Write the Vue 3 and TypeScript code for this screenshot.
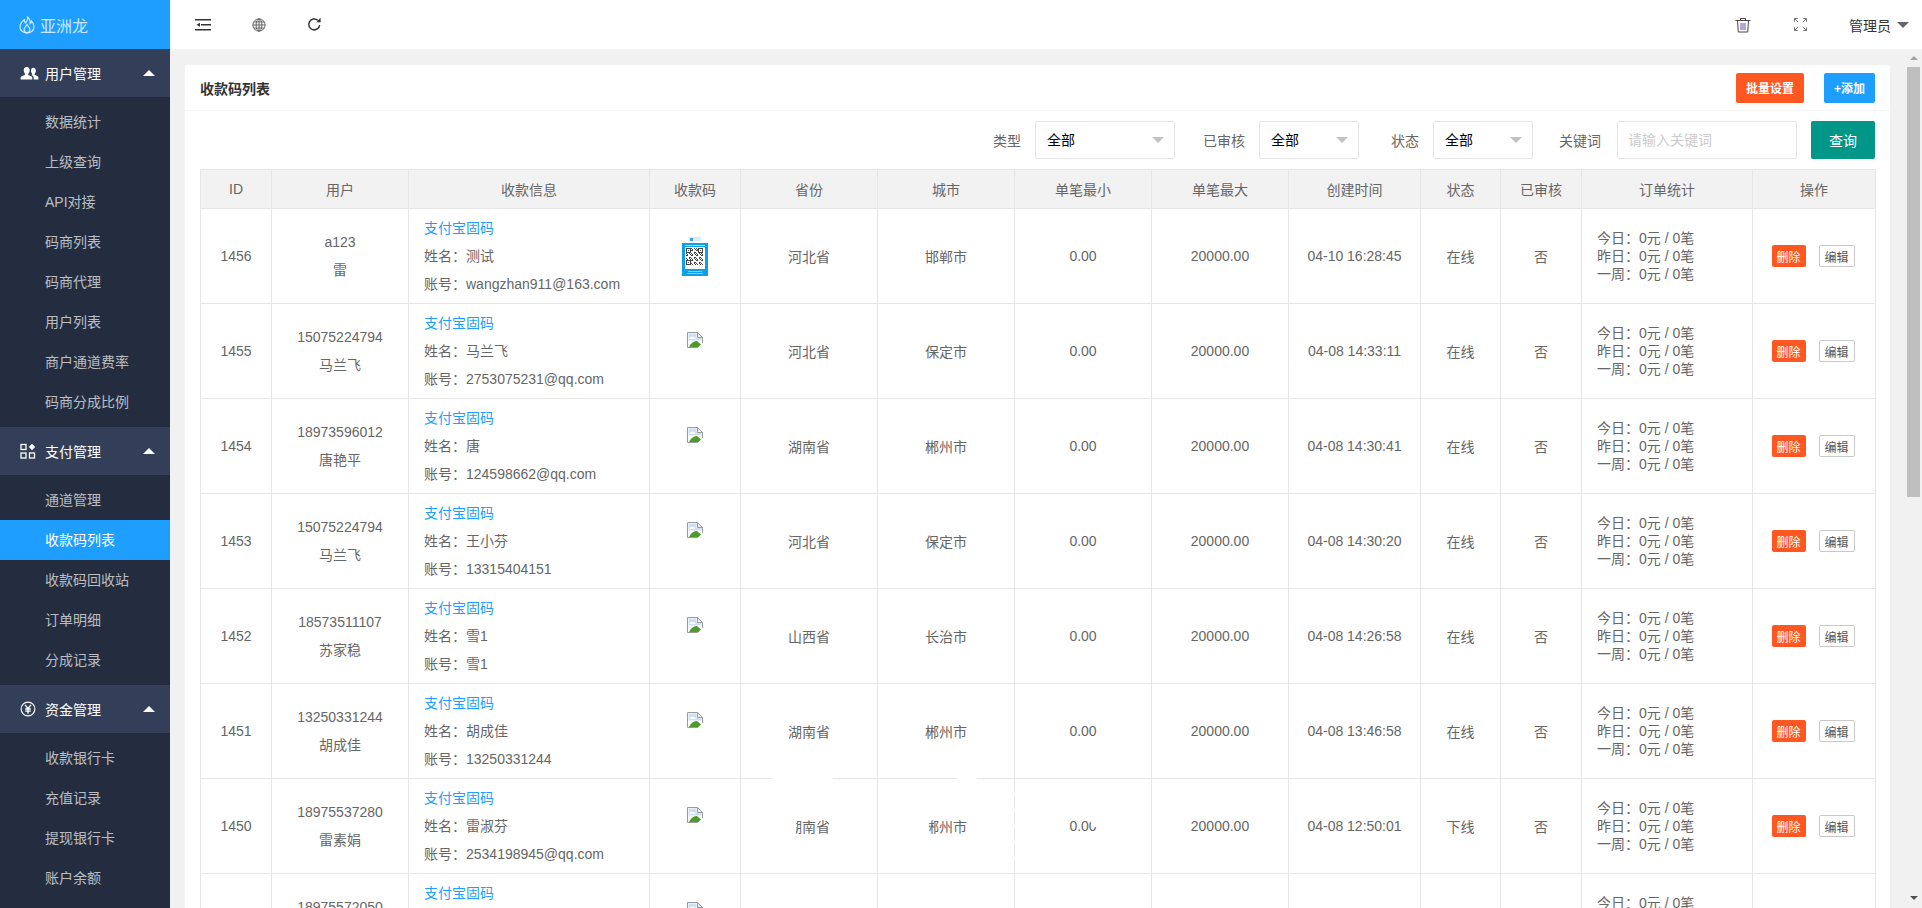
<template>
  <div class="page">
    <aside class="side">
      <div class="logo">
        <svg class="flame" viewBox="0 0 16 18" width="16" height="18" fill="none" stroke="currentColor" stroke-width="1.2">
          <path d="M8.500 1c.8 3-1 4.500-2 6C5.500 6 5.300 5 5.300 3.800 3 5.500 1 8 1 11c0 3.500 3 6 7 6s7-2.500 7-6c0-2.500-1-4.500-2.500-6 0 1.200-.5 2.200-1.300 2.800C11.300 5 10.500 2.500 8.500 1z" />
          <path d="M8 17c-2-.5-3-2-3-3.500C5 11.500 7 10.500 8 8.500c1 2 3 3 3 5 0 1.500-1 3-3 3.500z" />
        </svg>
        <span>亚洲龙</span>
      </div>
      <div v-for="group in menu" :key="group.title" class="group">
        <div class="head">
          <svg v-if="group.icon === 'users'" class="head-icon" viewBox="0 0 20 16" width="19" height="15" fill="#fff">
            <path d="M7 1.500c2 0 3.200 1.500 3.200 3.500S9.200 8.200 8.600 9c-.3.700.2 1.200 1.400 1.700 1.800.7 3 1.300 3 2.500V15H.5v-1.800c0-1.200 1.300-1.800 3-2.500C4.800 10.200 5.300 9.700 5.400 9 4.800 8.200 3.800 7 3.800 5S5 1.500 7 1.500z" />
            <path d="M14 2.500c1.700 0 2.800 1.300 2.800 3s-.9 2.700-1.400 3.500c-.2.600.2 1 1.200 1.400 1.500.6 2.900 1.100 2.900 2.300V15h-5v-2c0-1.300-1-2-2.500-2.800.5-.3 1-.6 1-1.200-.5-.8-1.400-1.800-1.400-3.500s1-3 2.400-3z" />
          </svg>
          <svg v-else-if="group.icon === 'apps'" class="head-icon" viewBox="0 0 16 16" width="16" height="16" fill="none" stroke="#fff" stroke-width="1.300">
            <rect x="1" y="1.500" width="5" height="5" />
            <rect x="1" y="10" width="5" height="5" />
            <rect x="9.500" y="10" width="5" height="5" />
            <path d="M12 .8l3.200 3.200L12 7.200 8.800 4z" fill="#fff" stroke="none" />
          </svg>
          <svg v-else class="head-icon" viewBox="0 0 16 16" width="16" height="16" fill="none" stroke="#fff" stroke-width="1.100">
            <circle cx="8" cy="8" r="6.900" />
            <path d="M5 3.800L8 7.500l3-3.700M8 7.500v5.200M5.200 8h5.600M5.200 10.200h5.600" stroke-width="1.300" />
          </svg>
          <span>{{ group.title }}</span>
          <i class="caret-up"></i>
        </div>
        <ul class="sub">
          <li v-for="item in group.items" :key="item" :class="{ active: item === current }">{{ item }}</li>
        </ul>
      </div>
    </aside>

    <div class="right">
      <header class="top">
        <div class="top-left">
          <svg viewBox="0 0 16 14" width="16" height="14" fill="#333">
            <rect x="0" y="1" width="16" height="1.500" />
            <rect x="6" y="6" width="10" height="1.500" />
            <rect x="0" y="11" width="16" height="1.500" />
            <path d="M1.500 6.800L5 4.800v4z" />
          </svg>
          <svg viewBox="0 0 16 16" width="14" height="14" fill="none" stroke="#555" stroke-width="1">
            <circle cx="8" cy="8" r="7" />
            <ellipse cx="8" cy="8" rx="3.300" ry="7" />
            <path d="M8 1v14M1 8h14M2 4.500h12M2 11.500h12" />
          </svg>
          <svg viewBox="0 0 16 16" width="15" height="15" fill="none" stroke="#333" stroke-width="1.600">
            <path d="M13.500 8.500A5.800 5.800 0 1 1 11.500 3.500" />
            <path d="M9.800 5.600h4.700V.9z" fill="#333" stroke="none" />
          </svg>
        </div>
        <div class="top-right">
          <svg class="trash" viewBox="0 0 16 16" width="16" height="16" fill="none" stroke="#444" stroke-width="1">
            <path d="M.5 3.500h15M5.500 3.500V1.500h5v2M2.500 3.500l.8 11.500h9.400l.8-11.500" />
            <path d="M6 6v7M8 6v7M10 6v7" stroke="#6a4fa0" />
          </svg>
          <svg class="expand" viewBox="0 0 14 14" width="13" height="13" fill="none" stroke="#666" stroke-width="1">
            <path d="M.5 4V.5H4M10 .5h3.500V4M13.500 10v3.500H10M4 13.500H.5V10M1 1l3.500 3.500M13 1L9.500 4.500M13 13L9.500 9.500M1 13l3.500-3.500" />
          </svg>
          <span class="admin">管理员</span>
          <i class="caret-down"></i>
        </div>
      </header>

      <div class="body">
        <main class="main">
          <section class="card">
            <div class="card-head">
              <span class="card-title">收款码列表</span>
              <div class="card-btns">
                <button class="btn orange">批量设置</button>
                <button class="btn blue">+添加</button>
              </div>
            </div>

            <div class="filters">
              <label class="f-label type">类型</label>
              <div class="select wide">全部<i class="caret-grey"></i></div>
              <label class="f-label audit">已审核</label>
              <div class="select">全部<i class="caret-grey"></i></div>
              <label class="f-label state">状态</label>
              <div class="select">全部<i class="caret-grey"></i></div>
              <label class="f-label word">关键词</label>
              <input class="keyword" placeholder="请输入关键词" />
              <button class="query">查询</button>
            </div>

            <div class="table-wrap">
              <table>
                <colgroup>
                  <col v-for="(w, i) in widths" :key="i" :style="{ width: w + 'px' }" />
                </colgroup>
                <thead>
                  <tr><th v-for="h in heads" :key="h">{{ h }}</th></tr>
                </thead>
                <tbody>
                  <tr v-for="(row, idx) in rows" :key="idx">
                    <td>{{ row.id }}</td>
                    <td class="two"><div>{{ row.user }}</div><div class="line">{{ row.real }}</div></td>
                    <td class="info">
                      <div class="link">支付宝固码</div>
                      <div>姓名：{{ row.name }}</div>
                      <div>账号：{{ row.account }}</div>
                    </td>
                    <td>
                      <div class="qr">
                        <svg v-if="idx === 0" viewBox="0 0 26 39" width="26" height="39" shape-rendering="crispEdges">
                          <rect x="7" y="0" width="12" height="4" fill="#d6ecf9" />
                          <rect x="8" y="0.500" width="3" height="3" fill="#3aa6e6" />
                          <rect x="0" y="6" width="26" height="33" fill="#0e9fe8" />
                          <rect x="3" y="8" width="20" height="1" fill="#9fd8f7" />
                          <rect x="3" y="10" width="20" height="22" fill="#fff" />
                          <rect v-for="c in qrCells" :key="c.x + '-' + c.y" :x="c.x" :y="c.y" width="1" height="1" fill="#444" />
                          <rect x="6" y="34" width="14" height="1" fill="#7cc9f3" />
                          <rect x="5" y="36" width="16" height="1" fill="#7cc9f3" />
                        </svg>
                        <svg v-else viewBox="0 0 16 16" width="16" height="16">
                          <path d="M.5.500h10l5 5v10H.5z" fill="#fff" stroke="#9a9a9a" />
                          <path d="M1.500 1.500h8v4h5v3H1.500z" fill="#cfe0f5" />
                          <path d="M2.500 6c1.500-1.800 4-1.800 6 0v1h-6z" fill="#fff" />
                          <path d="M2 15c2-4 5-6.500 8-6l4 3.500V15z" fill="#4f9a2d" />
                          <path d="M10.500.500v5h5z" fill="#f4f4f4" stroke="#9a9a9a" />
                          <path d="M16 10.500L10.500 16H16z" fill="#fff" />
                        </svg>
                      </div>
                    </td>
                    <td>{{ row.prov }}</td>
                    <td>{{ row.city }}</td>
                    <td>0.00</td>
                    <td>20000.00</td>
                    <td>{{ row.time }}</td>
                    <td>{{ row.state }}</td>
                    <td>否</td>
                    <td class="stats">
                      <div>今日：0元 / 0笔</div>
                      <div>昨日：0元 / 0笔</div>
                      <div>一周：0元 / 0笔</div>
                    </td>
                    <td>
                      <div class="ops">
                        <button class="xs del">删除</button>
                        <button class="xs edit">编辑</button>
                      </div>
                    </td>
                  </tr>
                </tbody>
              </table>
              <div class="patch p1"></div>
              <div class="patch p2"></div>
              <div class="patch p3"></div>
              <div class="patch p4"></div>
              <div class="patch p5"></div>
              <div class="patch p6"></div>
            </div>
          </section>
        </main>

        <div class="scrollbar">
          <i class="arrow-up"></i>
          <div class="thumb"></div>
          <i class="arrow-down"></i>
        </div>
      </div>
    </div>
  </div>
</template>

<script setup lang="ts">
const current = "收款码列表";

const menu = [
  {
    title: "用户管理",
    icon: "users",
    items: ["数据统计", "上级查询", "API对接", "码商列表", "码商代理", "用户列表", "商户通道费率", "码商分成比例"],
  },
  {
    title: "支付管理",
    icon: "apps",
    items: ["通道管理", "收款码列表", "收款码回收站", "订单明细", "分成记录"],
  },
  {
    title: "资金管理",
    icon: "rmb",
    items: ["收款银行卡", "充值记录", "提现银行卡", "账户余额"],
  },
];

const widths = [71, 137, 241, 91, 137, 137, 137, 137, 132, 80, 81, 171, 123];
const heads = ["ID", "用户", "收款信息", "收款码", "省份", "城市", "单笔最小", "单笔最大", "创建时间", "状态", "已审核", "订单统计", "操作"];

const rows = [
  { id: "1456", user: "a123", real: "雷", name: "测试", account: "wangzhan911@163.com", prov: "河北省", city: "邯郸市", time: "04-10 16:28:45", state: "在线" },
  { id: "1455", user: "15075224794", real: "马兰飞", name: "马兰飞", account: "2753075231@qq.com", prov: "河北省", city: "保定市", time: "04-08 14:33:11", state: "在线" },
  { id: "1454", user: "18973596012", real: "唐艳平", name: "唐", account: "124598662@qq.com", prov: "湖南省", city: "郴州市", time: "04-08 14:30:41", state: "在线" },
  { id: "1453", user: "15075224794", real: "马兰飞", name: "王小芬", account: "13315404151", prov: "河北省", city: "保定市", time: "04-08 14:30:20", state: "在线" },
  { id: "1452", user: "18573511107", real: "苏家稳", name: "雪1", account: "雪1", prov: "山西省", city: "长治市", time: "04-08 14:26:58", state: "在线" },
  { id: "1451", user: "13250331244", real: "胡成佳", name: "胡成佳", account: "13250331244", prov: "湖南省", city: "郴州市", time: "04-08 13:46:58", state: "在线" },
  { id: "1450", user: "18975537280", real: "雷素娟", name: "雷淑芬", account: "2534198945@qq.com", prov: "湖南省", city: "郴州市", time: "04-08 12:50:01", state: "下线" },
  { id: "", user: "18975572050", real: "", name: "", account: "", prov: "", city: "", time: "", state: "" },
];

// 收款码缩略图：三个定位角 + 伪随机点
const qrCells: { x: number; y: number }[] = [];
const isFinder = (a: number, b: number) => {
  const corner = (p: number, q: number) => {
    const dx = a - p;
    const dy = b - q;
    if (dx < 0 || dy < 0 || dx > 4 || dy > 4) return null;
    return !(dx === 0 || dy === 0 || dx === 4 || dy === 4) && !(dx === 2 && dy === 2);
  };
  return corner(0, 0) ?? corner(12, 0) ?? corner(0, 12);
};
for (let b = 0; b < 17; b++) {
  for (let a = 0; a < 17; a++) {
    const finder = isFinder(a, b);
    const dark = finder === null ? (a * 7 + b * 13 + a * b) % 5 < 2 : !finder;
    if (dark) qrCells.push({ x: 4 + a, y: 11 + b });
  }
}
</script>

<style>
html,
body {
  margin: 0;
  height: 100%;
  overflow: hidden;
}
</style>

<style scoped>
.page {
  display: flex;
  height: 908px;
  font-family: "Liberation Sans", "Noto Sans CJK SC", sans-serif;
  font-size: 14px;
  color: #666;
  overflow: hidden;
}

.side {
  width: 170px;
  flex: none;
  background: #232d3f;
  overflow: hidden;
}

.logo {
  height: 49px;
  background: #1e9fff;
  color: rgba(255, 255, 255, 0.75);
  display: flex;
  align-items: center;
  padding-left: 19px;
  font-size: 16px;
  gap: 5px;
}

.flame {
  flex: none;
}

.head {
  height: 48px;
  background: #333f58;
  color: #fff;
  display: flex;
  align-items: center;
  position: relative;
  padding-left: 45px;
}

.group:first-of-type .head {
  height: 49px;
}

.head-icon {
  position: absolute;
  left: 20px;
  top: 50%;
  transform: translateY(-50%);
}

.caret-up {
  position: absolute;
  left: 143px;
  top: 21px;
  border-left: 6px solid transparent;
  border-right: 6px solid transparent;
  border-bottom: 6px solid #fff;
}

.sub {
  list-style: none;
  margin: 0;
  padding: 5px 0;
  background: #232d3f;
  border-radius: 3px 3px 0 0;
}

.sub li {
  height: 40px;
  line-height: 40px;
  padding-left: 45px;
  color: rgba(255, 255, 255, 0.7);
}

.sub li.active {
  background: #1e9fff;
  color: #fff;
}

.right {
  flex: 1;
  min-width: 0;
  display: flex;
  flex-direction: column;
}

.top {
  height: 49px;
  flex: none;
  background: #fff;
  display: flex;
  justify-content: space-between;
  align-items: center;
}

.top-left {
  display: flex;
  align-items: center;
  gap: 41px;
  padding-left: 25px;
}

.top-right {
  display: flex;
  align-items: center;
  padding-right: 13px;
  color: #333;
}

.expand {
  margin-left: 43px;
}

.admin {
  margin-left: 42px;
}

.caret-down {
  margin-left: 6px;
  border-left: 6px solid transparent;
  border-right: 6px solid transparent;
  border-top: 6px solid #666;
}

.body {
  flex: 1;
  min-height: 0;
  display: flex;
  background: #f1f1f1;
}

.main {
  flex: 1;
  min-width: 0;
  padding: 16px 15px 0;
  overflow: hidden;
}

.scrollbar {
  width: 17px;
  flex: none;
  position: relative;
  display: flex;
  flex-direction: column;
  align-items: center;
  background: #f1f1f1;
}

.arrow-up {
  margin-top: 7px;
  border-left: 4px solid transparent;
  border-right: 4px solid transparent;
  border-bottom: 4px solid #a3a3a3;
}

.thumb {
  width: 13px;
  height: 430px;
  margin-top: 7px;
  background: #bfbfbf;
}

.arrow-down {
  position: absolute;
  bottom: 8px;
  border-left: 4px solid transparent;
  border-right: 4px solid transparent;
  border-top: 4px solid #505050;
}

.card {
  background: #fff;
  border-radius: 2px;
  padding-bottom: 20px;
}

.card-head {
  height: 45px;
  border-bottom: 1px solid #f6f6f6;
  display: flex;
  justify-content: space-between;
  align-items: center;
  padding: 0 15px 0 15px;
  box-sizing: content-box;
}

.card-title {
  color: #333;
  font-weight: 700;
}

.card-btns {
  display: flex;
  gap: 20px;
}

.btn {
  height: 30px;
  border: 0;
  border-radius: 2px;
  color: #fff;
  font: inherit;
  font-size: 12px;
  font-weight: 700;
  padding: 0;
}

.orange {
  width: 68px;
  background: #ff5722;
}

.blue {
  width: 51px;
  background: #1e9fff;
}

.filters {
  display: flex;
  justify-content: flex-end;
  align-items: center;
  padding: 10px 15px 10px 0;
}

.f-label {
  margin-right: 14px;
  white-space: nowrap;
}

.f-label.audit {
  margin-left: 28px;
}

.f-label.state {
  margin-left: 32px;
}

.f-label.word {
  margin-left: 26px;
  margin-right: 16px;
}

.select {
  position: relative;
  width: 100px;
  height: 38px;
  line-height: 36px;
  box-sizing: border-box;
  border: 1px solid #e6e6e6;
  border-radius: 2px;
  padding-left: 11px;
  color: #000;
}

.select.wide {
  width: 140px;
}

.caret-grey {
  position: absolute;
  right: 10px;
  top: 15px;
  border-left: 6px solid transparent;
  border-right: 6px solid transparent;
  border-top: 6px solid #c2c2c2;
}

.keyword {
  width: 180px;
  height: 38px;
  box-sizing: border-box;
  border: 1px solid #e6e6e6;
  border-radius: 2px;
  padding: 0 0 0 10px;
  font: inherit;
  outline: none;
}

.keyword::placeholder {
  color: #ccc;
}

.query {
  margin-left: 14px;
  width: 64px;
  height: 38px;
  border: 0;
  border-radius: 2px;
  background: #009688;
  color: #fff;
  font: inherit;
}

.table-wrap {
  position: relative;
  margin: 0 15px;
}

table {
  width: 1675px;
  table-layout: fixed;
  border-collapse: collapse;
  background: #fff;
}

th,
td {
  border: 1px solid #e6e6e6;
  text-align: center;
  font-weight: 400;
  padding: 0;
  color: #666;
}

th {
  height: 38px;
  background: #f2f2f2;
}

td {
  height: 94px;
}

.two div {
  line-height: 28px;
  min-height: 28px;
}

.info {
  text-align: left;
  padding-left: 15px;
  line-height: 28px;
}

.info div {
  min-height: 28px;
}

.link {
  color: #1e9fff;
}

.qr {
  height: 38px;
  display: flex;
  justify-content: center;
  align-items: flex-start;
}

.stats {
  text-align: left;
  padding-left: 15px;
  line-height: 18px;
}

.ops {
  display: flex;
  justify-content: center;
  gap: 13px;
  padding-right: 2px;
}

.xs {
  height: 22px;
  border-radius: 2px;
  font: inherit;
  font-size: 12px;
  padding: 0;
  box-sizing: border-box;
}

.del {
  width: 34px;
  border: 0;
  background: #ff5722;
  color: #fff;
}

.edit {
  width: 36px;
  border: 1px solid #c9c9c9;
  background: #fff;
  color: #555;
}

/* 第7行上的白色残影 */
.patch {
  position: absolute;
  background: #fff;
}

.p1 {
  left: 572px;
  top: 608px;
  width: 61px;
  height: 3px;
}

.p2 {
  left: 757px;
  top: 608px;
  width: 20px;
  height: 3px;
}

.p3 {
  left: 588px;
  top: 648px;
  width: 8px;
  height: 18px;
}

.p4 {
  left: 724px;
  top: 648px;
  width: 5px;
  height: 18px;
}

.p5 {
  left: 813px;
  top: 611px;
  width: 3px;
  height: 92px;
  background: repeating-linear-gradient(transparent 0 13px, #fff 13px 16px);
}

.p6 {
  left: 891px;
  top: 652px;
  width: 6px;
  height: 6px;
}
</style>
